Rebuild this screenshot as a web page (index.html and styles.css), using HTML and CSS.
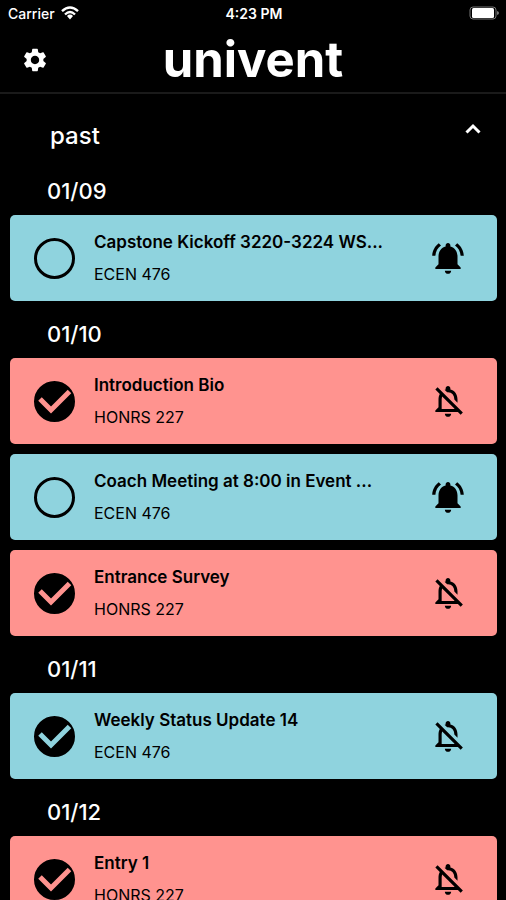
FILE: index.html
```html
<!DOCTYPE html>
<html lang="en">

<head>
    <meta charset="UTF-8">
    <meta name="viewport" content="width=device-width, initial-scale=1.0">
    <title>univent</title>
    <link rel="stylesheet" href="styles.css">
</head>

<body>
    <!-- Shared icons -->
    <svg class="icon-defs" aria-hidden="true">
        <symbol id="check" viewBox="0 0 41 41">
            <path d="M6 18L17 29L35.500 10.500" fill="none" stroke="currentColor" stroke-width="5" />
        </symbol>
        <symbol id="bell-on" viewBox="0 0 24 24">
            <path d="M7.580 4.080L6.150 2.650C3.750 4.480 2.170 7.300 2.030 10.500h2c.15-2.650 1.510-4.970 3.550-6.420zm12.390 6.420h2c-.15-3.200-1.730-6.020-4.120-7.850l-1.420 1.430c2.020 1.450 3.390 3.770 3.540 6.420zM18 11c0-3.070-1.640-5.640-4.500-6.320V4c0-.83-.67-1.500-1.500-1.500s-1.500.67-1.500 1.500v.68C7.630 5.360 6 7.920 6 11v5l-2 2v1h16v-1l-2-2zm-6 11c1.100 0 2-.9 2-2h-4c0 1.100.9 2 2 2z" />
        </symbol>
        <symbol id="bell-off" viewBox="0 0 24 24">
            <path d="M12 22c1.100 0 2-.9 2-2h-4c0 1.100.9 2 2 2zm0-15.500c2.490 0 4 2.020 4 4.500v.1l2 2V11c0-3.070-1.630-5.640-4.500-6.320V4c0-.83-.67-1.500-1.500-1.500s-1.500.67-1.500 1.500v.68c-.24.06-.47.15-.69.23l1.640 1.640c.18-.02.36-.05.55-.05zM5.410 3.350L4 4.760l2.810 2.810C6.290 8.570 6 9.740 6 11v5l-2 2v1h14.240l1.740 1.740 1.410-1.410L5.410 3.350zM16 17H8v-6c0-.68.12-1.320.34-1.900L16 16.760V17z" />
        </symbol>
    </svg>

    <div class="app">
        <div class="status-bar">
            <div class="carrier">
                <span>Carrier</span>
                <svg class="wifi" viewBox="0 0 18 14" aria-hidden="true">
                    <g fill="none" stroke="currentColor" stroke-width="2.400">
                        <path d="M1 5.200Q9-2.200 17 5.200" />
                        <path d="M4 8.500Q9 3.700 14 8.500" />
                    </g>
                    <path d="M9 8.600q1.800 0 3 1.300L9 13.500 6 9.900q1.200-1.300 3-1.300z" />
                </svg>
            </div>
            <span>4:23 PM</span>
            <svg class="battery" viewBox="0 0 31 14" aria-hidden="true">
                <rect x="1" y="1" width="26" height="12" rx="3" fill="none" stroke="#777" />
                <rect x="3" y="2" width="22" height="10" rx="1.500" />
                <path d="M28 5q2 .5 2 2t-2 2z" fill="#777" />
            </svg>
        </div>

        <header class="header">
            <button class="icon-button" type="button" aria-label="Settings">
                <svg class="gear" viewBox="0 0 24 24">
                    <path d="M19.140 12.940c.04-.3.06-.61.06-.94 0-.32-.02-.64-.07-.94l2.030-1.580c.18-.14.23-.41.12-.61l-1.920-3.320c-.12-.22-.37-.29-.59-.22l-2.390.96c-.5-.38-1.030-.7-1.620-.94l-.36-2.540c-.04-.24-.24-.41-.48-.41h-3.840c-.24 0-.43.17-.47.41l-.36 2.540c-.59.24-1.130.57-1.620.94l-2.390-.96c-.22-.08-.47 0-.59.22L2.740 8.870c-.12.21-.08.47.12.61l2.030 1.580c-.05.3-.09.63-.09.94s.02.64.07.94l-2.030 1.580c-.18.14-.23.41-.12.61l1.920 3.320c.12.22.37.29.59.22l2.390-.96c.5.38 1.030.7 1.620.94l.36 2.540c.05.24.24.41.48.41h3.840c.24 0 .44-.17.47-.41l.36-2.540c.59-.24 1.130-.56 1.620-.94l2.390.96c.22.08.47 0 .59-.22l1.920-3.320c.12-.22.07-.47-.12-.61l-2.010-1.580zM12 15.600c-1.980 0-3.600-1.620-3.600-3.600s1.620-3.600 3.600-3.600 3.600 1.620 3.600 3.600-1.620 3.600-3.600 3.600z" />
                </svg>
            </button>
            <h1>univent</h1>
        </header>

        <main class="events">
            <button class="section-toggle" type="button" aria-expanded="true">
                <span>past</span>
                <svg class="chevron" viewBox="0 0 16 12" aria-hidden="true">
                    <path d="M1.500 9.500L8 3l6.500 6.500" fill="none" stroke="currentColor" stroke-width="3" />
                </svg>
            </button>

            <section class="day">
                <h2>01/09</h2>
                <article class="card blue">
                    <label class="check">
                        <input type="checkbox" aria-label="Capstone Kickoff done">
                        <svg><use href="#check" /></svg>
                    </label>
                    <div class="info">
                        <h3>Capstone Kickoff 3220-3224 WS...</h3>
                        <p>ECEN 476</p>
                    </div>
                    <button class="icon-button" type="button" aria-label="Turn reminder off">
                        <svg class="bell"><use href="#bell-on" /></svg>
                    </button>
                </article>
            </section>

            <section class="day">
                <h2>01/10</h2>
                <article class="card red">
                    <label class="check">
                        <input type="checkbox" aria-label="Introduction Bio done" checked>
                        <svg><use href="#check" /></svg>
                    </label>
                    <div class="info">
                        <h3>Introduction Bio</h3>
                        <p>HONRS 227</p>
                    </div>
                    <button class="icon-button" type="button" aria-label="Turn reminder on">
                        <svg class="bell"><use href="#bell-off" /></svg>
                    </button>
                </article>
                <article class="card blue">
                    <label class="check">
                        <input type="checkbox" aria-label="Coach Meeting done">
                        <svg><use href="#check" /></svg>
                    </label>
                    <div class="info">
                        <h3>Coach Meeting at 8:00 in Event ...</h3>
                        <p>ECEN 476</p>
                    </div>
                    <button class="icon-button" type="button" aria-label="Turn reminder off">
                        <svg class="bell"><use href="#bell-on" /></svg>
                    </button>
                </article>
                <article class="card red">
                    <label class="check">
                        <input type="checkbox" aria-label="Entrance Survey done" checked>
                        <svg><use href="#check" /></svg>
                    </label>
                    <div class="info">
                        <h3>Entrance Survey</h3>
                        <p>HONRS 227</p>
                    </div>
                    <button class="icon-button" type="button" aria-label="Turn reminder on">
                        <svg class="bell"><use href="#bell-off" /></svg>
                    </button>
                </article>
            </section>

            <section class="day">
                <h2>01/11</h2>
                <article class="card blue">
                    <label class="check">
                        <input type="checkbox" aria-label="Weekly Status Update 14 done" checked>
                        <svg><use href="#check" /></svg>
                    </label>
                    <div class="info">
                        <h3>Weekly Status Update 14</h3>
                        <p>ECEN 476</p>
                    </div>
                    <button class="icon-button" type="button" aria-label="Turn reminder on">
                        <svg class="bell"><use href="#bell-off" /></svg>
                    </button>
                </article>
            </section>

            <section class="day">
                <h2>01/12</h2>
                <article class="card red">
                    <label class="check">
                        <input type="checkbox" aria-label="Entry 1 done" checked>
                        <svg><use href="#check" /></svg>
                    </label>
                    <div class="info">
                        <h3>Entry 1</h3>
                        <p>HONRS 227</p>
                    </div>
                    <button class="icon-button" type="button" aria-label="Turn reminder on">
                        <svg class="bell"><use href="#bell-off" /></svg>
                    </button>
                </article>
            </section>
        </main>
    </div>
</body>

</html>
```

FILE: styles.css
```css
* {
    margin: 0;
    padding: 0;
    box-sizing: border-box;
}

body {
    font-family: Inter, "Liberation Sans", sans-serif;
    background-color: #000;
    color: #fff;
}

svg {
    display: block;
    fill: currentColor;
}

button {
    font: inherit;
    color: inherit;
    background: none;
    border: none;
    cursor: pointer;
}

.icon-defs {
    display: none;
}

.app {
    display: flex;
    flex-direction: column;
    height: 100vh;
}

/* Status bar */
.status-bar {
    display: grid;
    grid-template-columns: 1fr auto 1fr;
    align-items: center;
    height: 26px;
    padding: 0 6px 0 8px;
    font-size: 14px;
    font-weight: 600;
}

.carrier {
    display: flex;
    align-items: center;
    gap: 6px;
    font-weight: 500;
}

.wifi {
    width: 18px;
    height: 14px;
}

.battery {
    width: 31px;
    height: 14px;
    justify-self: end;
}

/* Header */
.header {
    display: grid;
    grid-template-columns: 40px 1fr 40px;
    align-items: center;
    height: 68px;
    padding: 0 15px;
    border-bottom: 2px solid #1a1a1a;
    flex-shrink: 0;
}

.header h1 {
    font-size: 49px;
    line-height: 68px;
    font-weight: 700;
    text-align: center;
}

.icon-button {
    display: flex;
    align-items: center;
    justify-content: center;
    width: 40px;
    height: 40px;
}

.gear {
    width: 28px;
    height: 28px;
}

/* Event list */
.events {
    flex: 1;
    min-height: 0;
    padding: 0 9px 0 10px;
    overflow-y: auto;
    scrollbar-width: none;
}

.section-toggle {
    display: flex;
    align-items: center;
    justify-content: space-between;
    width: 100%;
    height: 64px;
    padding: 6px 16px 0 40px;
}

.section-toggle span {
    font-size: 24px;
    line-height: 32px;
    font-weight: 500;
    padding-top: 14px;
}

.chevron {
    width: 16px;
    height: 12px;
}

.day h2 {
    padding: 4px 0 0 37px;
    height: 57px;
    line-height: 58px;
    font-size: 22px;
    font-weight: 500;
}

.day .card + .card {
    margin-top: 10px;
}

.card {
    display: flex;
    align-items: center;
    height: 86px;
    padding: 0 29px 0 24px;
    border-radius: 5px;
    color: #000;
}

.blue {
    background-color: #8fd3de;
}

.red {
    background-color: #ff938f;
}

.check {
    display: grid;
    color: #8fd3de;
    cursor: pointer;
}

.red .check {
    color: #ff938f;
}

.check input,
.check svg {
    grid-area: 1 / 1;
    width: 41px;
    height: 41px;
}

.check input {
    appearance: none;
    border: 3px solid #000;
    border-radius: 50%;
}

.check input:checked {
    background-color: #000;
}

.check svg {
    visibility: hidden;
    pointer-events: none;
}

.check input:checked + svg {
    visibility: visible;
}

.info {
    flex: 1;
    min-width: 0;
    padding-left: 19px;
}

.info h3 {
    font-size: 17px;
    line-height: 32px;
    font-weight: 600;
    white-space: nowrap;
}

.info p {
    font-size: 16px;
    line-height: 32px;
}

.bell {
    width: 38px;
    height: 38px;
}
```
